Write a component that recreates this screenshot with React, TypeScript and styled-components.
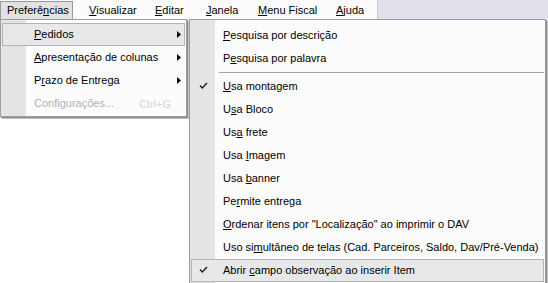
import React from "react";
import styled, { createGlobalStyle } from "styled-components";

const GlobalStyle = createGlobalStyle`
  html, body {
    margin: 0;
    padding: 0;
    background: #ffffff;
  }
  body {
    font-family: "Liberation Sans", Arial, sans-serif;
    font-size: 11px;
    color: #000;
  }
`;

type Entry =
  | { kind: "item"; label: React.ReactNode; checked?: boolean; active?: boolean }
  | { kind: "sep" };

const topItems: { label: React.ReactNode; w: number; open?: boolean }[] = [
  { label: <>Preferê<u>n</u>cias</>, w: 73, open: true },
  { label: <><u>V</u>isualizar</>, w: 57 },
  { label: <><u>E</u>ditar</>, w: 42 },
  { label: <><u>J</u>anela</>, w: 43 },
  { label: <><u>M</u>enu Fiscal</>, w: 69 },
  { label: <><u>A</u>juda</>, w: 49 },
];

const pedidos: Entry[] = [
  { kind: "item", label: <><u>P</u>esquisa por descrição</> },
  { kind: "item", label: <>P<u>e</u>squisa por palavra</> },
  { kind: "sep" },
  { kind: "item", label: <><u>U</u>sa montagem</>, checked: true },
  { kind: "item", label: <>U<u>s</u>a Bloco</> },
  { kind: "item", label: <>Us<u>a</u> frete</> },
  { kind: "item", label: <>Usa <u>I</u>magem</> },
  { kind: "item", label: <>Usa <u>b</u>anner</> },
  { kind: "item", label: <>Pe<u>r</u>mite entrega</> },
  { kind: "item", label: <><u>O</u>rdenar itens por "Localização" ao imprimir o DAV</> },
  { kind: "item", label: <>Uso si<u>m</u>ultâneo de telas (Cad. Parceiros, Saldo, Dav/Pré-Venda)</> },
  { kind: "item", label: <>Abrir <u>c</u>ampo observação ao inserir Item</>, checked: true, active: true },
];

const Check = () => (
  <svg width="9" height="8" viewBox="0 0 9 8">
    <path d="M1 3.5 L3.3 6 L8 1" fill="none" stroke="#222" strokeWidth="1.5" />
  </svg>
);

const Arrow = () => (
  <svg width="4" height="7" viewBox="0 0 4 7">
    <path d="M0 0 L4 3.5 L0 7 Z" fill="#000" />
  </svg>
);

const App: React.FC = () => {
  return (
    <Screen>
      <GlobalStyle />
      <TopBar>
        <MenuBar>
          {topItems.map((t, i) => (
            <BarItem key={i} $w={t.w} $open={t.open}>
              {t.label}
            </BarItem>
          ))}
        </MenuBar>
      </TopBar>

      <Workspace>
        <Dropdown>
          <Row $active>
            <Label><u>P</u>edidos</Label>
            <Arrow />
          </Row>
          <Row>
            <Label><u>A</u>presentação de colunas</Label>
            <Arrow />
          </Row>
          <Row>
            <Label>P<u>r</u>azo de Entrega</Label>
            <Arrow />
          </Row>
          <Row $disabled>
            <Label>Configurações...</Label>
            <Shortcut>Ctrl+G</Shortcut>
          </Row>
        </Dropdown>

        <SubMenu>
          {pedidos.map((e, i) =>
            e.kind === "sep" ? (
              <Separator key={i} />
            ) : (
              <Row key={i} $active={e.active}>
                {e.checked && (
                  <CheckBox>
                    <Check />
                  </CheckBox>
                )}
                <Label>{e.label}</Label>
              </Row>
            )
          )}
        </SubMenu>
      </Workspace>
    </Screen>
  );
};

export default App;

const Screen = styled.div`
  width: 548px;
  height: 283px;
  display: flex;
  flex-direction: column;
  overflow: hidden;
  background: #ffffff;
`;

const TopBar = styled.div`
  height: 19px;
  flex: none;
  display: flex;
  background: #dfe0e9;
`;

const MenuBar = styled.div`
  width: 378px;
  display: flex;
  gap: 9px;
  background: #fcfcfc;
  border-right: 1px solid #c9c9d2;
  box-sizing: border-box;
`;

const BarItem = styled.div<{ $w: number; $open?: boolean }>`
  width: ${(p) => p.$w}px;
  flex: none;
  box-sizing: border-box;
  display: flex;
  align-items: center;
  padding-left: 6px;
  margin-top: 1px;
  height: 18px;
  white-space: nowrap;
  background: ${(p) => (p.$open ? "#e2e2e4" : "transparent")};
  border: 1px solid ${(p) => (p.$open ? "#9a9a9a" : "transparent")};
  border-bottom: none;
  padding-bottom: 1px;
`;

const Workspace = styled.div`
  flex: 1;
  position: relative;
  background: #ffffff;
`;

const MenuPanel = styled.div`
  position: absolute;
  top: 0;
  box-sizing: border-box;
  display: flex;
  flex-direction: column;
  border: 1px solid #9d9d9d;
  background: linear-gradient(to right, #e4e4e4 0 25px, #fcfcfc 25px);
`;

const Dropdown = styled(MenuPanel)`
  left: 0;
  width: 187px;
  padding: 3px 1px 1px 1px;
  box-shadow: 1px 1px 0 #8c8c8c, 2px 2px 0 #c4c4c4;
  z-index: 2;
`;

const SubMenu = styled(MenuPanel)`
  left: 189px;
  width: 357px;
  height: 270px;
  padding: 4px 1px 1px 1px;
  box-shadow: 1px 1px 0 #8c8c8c, 2px 2px 0 #c4c4c4;
  z-index: 1;
`;

const Row = styled.div<{ $active?: boolean; $disabled?: boolean }>`
  position: relative;
  height: 23px;
  flex: none;
  box-sizing: border-box;
  display: flex;
  align-items: center;
  justify-content: space-between;
  padding: 0 3px 0 31px;
  white-space: nowrap;
  color: ${(p) => (p.$disabled ? "#b2b2b2" : "#000")};
  background: ${(p) => (p.$active ? "#e8e8ea" : "transparent")};
  border: 1px solid ${(p) => (p.$active ? "#b4b4b8" : "transparent")};
`;

const Label = styled.span`
  padding-bottom: 1px;
`;

const Shortcut = styled.span`
  color: #d6d6d6;
  margin-right: 10px;
`;

const CheckBox = styled.span`
  position: absolute;
  left: 7px;
  top: 6px;
  display: flex;
`;

const Separator = styled.div`
  height: 5px;
  flex: none;
  margin-left: 28px;
  display: flex;
  align-items: center;
  &::after {
    content: "";
    flex: 1;
    height: 1px;
    background: #a6a6a6;
  }
`;
